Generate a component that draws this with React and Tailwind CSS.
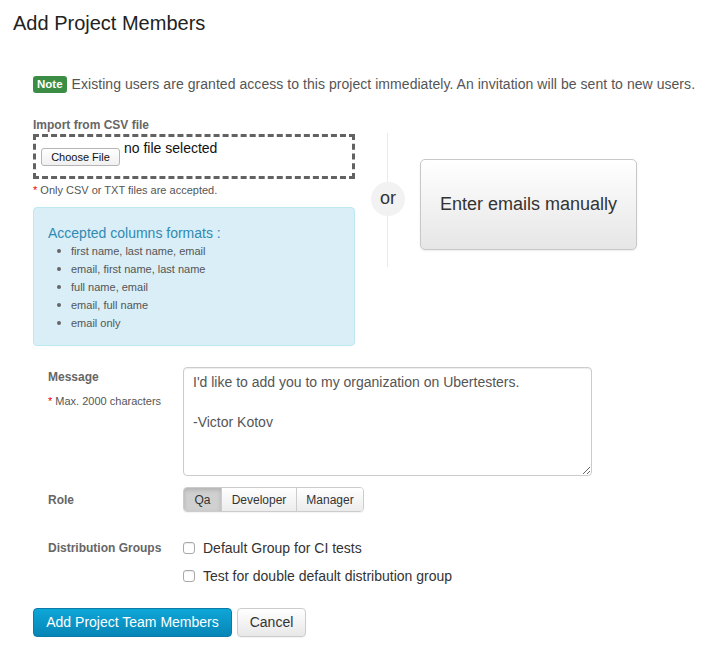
import React from 'react';

const formats = [
  'first name, last name, email',
  'email, first name, last name',
  'full name, email',
  'email, full name',
  'email only',
];

const Checkbox = ({ label }) => (
  <label className="flex items-center h-[20px] text-[14px] leading-[20px] text-[#333]">
    <span className="w-[12px] h-[12px] mr-[8px] rounded-[3px] border border-[#a9a9a9] bg-white shadow-[inset_0_1px_1px_rgba(0,0,0,0.08)]" />
    {label}
  </label>
);

const App = () => {
  return (
    <div className="w-[713px] h-[651px] bg-white overflow-hidden pt-[11px] font-['Liberation_Sans',Arial,sans-serif] text-[#333]">
      <h1 className="pl-[13px] text-[20px] leading-[24px] font-normal text-[#222]">Add Project Members</h1>

      <div className="pl-[33px] mt-[41px]">
        <div className="flex items-center h-[17px]">
          <span className="h-[17px] px-[4px] rounded-[3px] bg-[#3b8d45] text-white text-[11.5px] font-bold leading-[17px]">Note</span>
          <span className="ml-[5px] text-[14px] text-[#555] tracking-[0.05px]">
            Existing users are granted access to this project immediately. An invitation will be sent to new users.
          </span>
        </div>

        <div className="flex items-start mt-[24px]">
          <div className="w-[322px]">
            <div className="text-[12px] leading-[16px] font-bold text-[#666]">Import from CSV file</div>
            <div className="mt-[1px] h-[45px] border-[3px] border-dashed border-[#626262] flex items-start pl-[5px]">
              <span className="mt-[11px] h-[18px] w-[79px] flex items-center justify-center rounded-[3px] border border-[#b5b5b5] bg-gradient-to-b from-white to-[#f0f0f0] text-[11px] text-[#111]">
                Choose File
              </span>
              <span className="ml-[4px] mt-[3px] text-[14px] leading-[16px] text-[#111]">no file selected</span>
            </div>
            <div className="mt-[4px] text-[11px] leading-[14px] text-[#555]">
              <span className="text-[#e00]">*</span> Only CSV or TXT files are accepted.
            </div>
            <div className="mt-[10px] h-[139px] rounded-[4px] border border-[#bce8f1] bg-[#d9eef7] pt-[15px] pl-[14px]">
              <div className="text-[14px] leading-[20px] text-[#2f8ab3]">Accepted columns formats :</div>
              <ul className="-mt-[1px]">
                {formats.map((f) => (
                  <li key={f} className="flex items-center h-[18px] text-[11px] text-[#555]">
                    <span className="ml-[9px] mr-[10px] w-[4px] h-[4px] rounded-full bg-[#666]" />
                    {f}
                  </li>
                ))}
              </ul>
            </div>
          </div>

          <div className="w-[65px] mt-[16px] h-[134px] relative flex justify-center">
            <div className="w-px h-full bg-[#eaeaea]" />
            <div className="absolute top-[49px] left-[16px] w-[34px] h-[34px] rounded-full bg-[#f2f2f2] flex items-center justify-center text-[18px] leading-none text-[#333] pb-[2px]">
              or
            </div>
          </div>

          <button className="mt-[42px] w-[217px] h-[91px] rounded-[5px] border border-[#c8c8c8] bg-gradient-to-b from-white to-[#e6e6e6] shadow-[0_1px_2px_rgba(0,0,0,0.08)] text-[18px] text-[#333]">
            Enter emails manually
          </button>
        </div>

        <div className="flex mt-[21px] pl-[15px]">
          <div className="w-[135px] pt-[2px]">
            <div className="text-[12px] leading-[16px] font-bold text-[#666]">Message</div>
            <div className="mt-[9px] text-[11px] leading-[14px] text-[#555]">
              <span className="text-[#e00]">*</span> Max. 2000 characters
            </div>
          </div>
          <textarea
            className="w-[409px] h-[109px] rounded-[4px] border border-[#ccc] shadow-[inset_0_1px_1px_rgba(0,0,0,0.075)] pt-[4px] px-[9px] text-[14px] leading-[20px] text-[#555] font-['Liberation_Sans',Arial,sans-serif] outline-none"
            defaultValue={"I'd like to add you to my organization on Ubertesters.\n\n-Victor Kotov"}
          />
        </div>

        <div className="flex items-center mt-[11px] pl-[15px]">
          <div className="w-[135px] text-[12px] leading-[16px] font-bold text-[#666]">Role</div>
          <div className="flex h-[25px] rounded-[4px] border border-[#ccc] overflow-hidden text-[12px] text-[#333] shadow-[0_1px_1px_rgba(0,0,0,0.05)]">
            <span className="w-[37px] flex items-center justify-center bg-[#d0d0d0] shadow-[inset_0_2px_4px_rgba(0,0,0,0.15)]">Qa</span>
            <span className="w-[75px] flex items-center justify-center border-l border-[#ccc] bg-gradient-to-b from-white to-[#ececec]">Developer</span>
            <span className="w-[67px] flex items-center justify-center border-l border-[#ccc] bg-gradient-to-b from-white to-[#ececec]">Manager</span>
          </div>
        </div>

        <div className="flex mt-[26px] pl-[15px]">
          <div className="w-[135px] pt-[2px] text-[12px] leading-[16px] font-bold text-[#666]">Distribution Groups</div>
          <div className="flex flex-col gap-[8px]">
            <Checkbox label="Default Group for CI tests" />
            <Checkbox label="Test for double default distribution group" />
          </div>
        </div>

        <div className="flex mt-[22px] gap-[5px]">
          <button className="w-[199px] h-[29px] rounded-[4px] border border-[#0a7aa6] bg-gradient-to-b from-[#0ea6d8] to-[#0786b6] text-white text-[14px]">
            Add Project Team Members
          </button>
          <button className="w-[69px] h-[29px] rounded-[4px] border border-[#ccc] bg-gradient-to-b from-white to-[#e8e8e8] text-[#333] text-[14px] shadow-[0_1px_1px_rgba(0,0,0,0.05)]">
            Cancel
          </button>
        </div>
      </div>
    </div>
  );
};

export default App;
